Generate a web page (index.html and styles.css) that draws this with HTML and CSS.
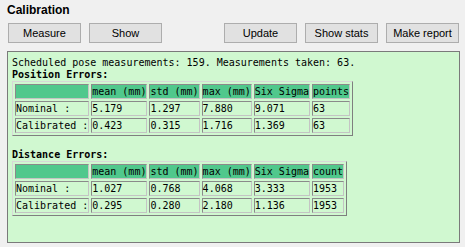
FILE: index.html
```html
<!DOCTYPE html>
<html lang="en">
<head>
	<meta charset="UTF-8">
	<title>Calibration</title>
	<link rel="stylesheet" href="styles.css">
</head>
<body>
	<div class="title">Calibration</div>
	<!-- button bar -->
	<div class="toolbar">
		<div class="group">
			<button class="btn">Measure</button>
			<button class="btn">Show</button>
		</div>
		<div class="group">
			<button class="btn">Update</button>
			<button class="btn">Show stats</button>
			<button class="btn">Make report</button>
		</div>
	</div>
	<!-- results -->
	<div class="panel">
		<div class="line">Scheduled pose measurements: 159. Measurements taken: 63.</div>
		<div class="line head">Position Errors:</div>
		<table class="stats">
			<tr class="top">
				<td class="blank"></td>
				<td>mean (mm)</td>
				<td>std (mm)</td>
				<td>max (mm)</td>
				<td>Six Sigma</td>
				<td>points</td>
			</tr>
			<tr>
				<td>Nominal :</td>
				<td>5.179</td>
				<td>1.297</td>
				<td>7.880</td>
				<td>9.071</td>
				<td>63</td>
			</tr>
			<tr>
				<td>Calibrated :</td>
				<td>0.423</td>
				<td>0.315</td>
				<td>1.716</td>
				<td>1.369</td>
				<td>63</td>
			</tr>
		</table>
		<div class="line head gap">Distance Errors:</div>
		<table class="stats">
			<tr class="top">
				<td class="blank"></td>
				<td>mean (mm)</td>
				<td>std (mm)</td>
				<td>max (mm)</td>
				<td>Six Sigma</td>
				<td>count</td>
			</tr>
			<tr>
				<td>Nominal :</td>
				<td>1.027</td>
				<td>0.768</td>
				<td>4.068</td>
				<td>3.333</td>
				<td>1953</td>
			</tr>
			<tr>
				<td>Calibrated :</td>
				<td>0.295</td>
				<td>0.280</td>
				<td>2.180</td>
				<td>1.136</td>
				<td>1953</td>
			</tr>
		</table>
	</div>
</body>
</html>
```

FILE: styles.css
```css
* {
    padding: 0;
    margin: 0;
    box-sizing: border-box;
}

body {
    background: #f0f0f0;
    font-family: "Liberation Sans", Arial, sans-serif;
    color: #000;
}

.title {
    font-size: 12px;
    font-weight: bold;
    line-height: 16px;
    padding: 2px 0 0 7px;
}

.toolbar {
    display: flex;
    justify-content: space-between;
    margin-top: 5px;
    padding: 0 6px 0 8px;
}

.group {
    display: flex;
    gap: 8px;
}

.btn {
    width: 73px;
    height: 20px;
    background: #e1e1e1;
    border: 1px solid #adadad;
    font-family: "Liberation Sans", Arial, sans-serif;
    font-size: 11px;
    color: #000;
}

.panel {
    margin: 8px 0 0 7px;
    width: 453px;
    height: 192px;
    background: #d0f8d0;
    border: 1px solid #7a7a7a;
    padding: 5px 4px;
    font-family: "DejaVu Sans Mono", monospace;
    font-size: 10px;
    line-height: 12px;
}

.head {
    font-weight: bold;
}

.gap {
    margin-top: 13px;
}

.stats {
    border-collapse: separate;
    border-spacing: 2px;
    border: 1px solid;
    border-color: #d8d8d8 #7f7f7f #7f7f7f #d8d8d8;
}

.stats td {
    padding: 0;
    height: 15px;
    line-height: 13px;
    white-space: pre;
    border: 1px solid;
    border-color: #8a8a8a #c4c4c4 #c4c4c4 #8a8a8a;
}

.stats .top td {
    background: #50c88c;
}
```
